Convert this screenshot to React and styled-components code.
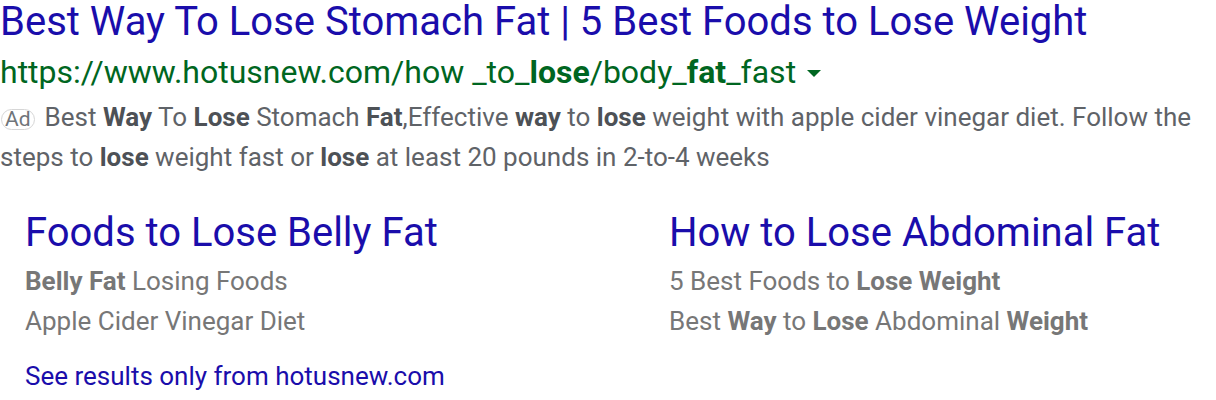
import React from "react";
import styled, { createGlobalStyle } from "styled-components";

const Global = createGlobalStyle`
  html, body { margin: 0; padding: 0; background: #fff; }
  body { font-family: Roboto, "Noto Sans", Arial, sans-serif; }
`;

const Result = styled.div`
  display: flex;
  flex-direction: column;
  width: 1216px;
`;

const Title = styled.a`
  font-size: 40px;
  line-height: 44px;
  color: #1a0dab;
  text-decoration: none;
  white-space: nowrap;
`;

const UrlLine = styled.div`
  display: flex;
  align-items: center;
  margin-top: 8px;
  font-size: 32px;
  line-height: 40px;
  color: #006621;
  white-space: nowrap;
  b { font-weight: 700; }
`;

const Caret = styled.span`
  display: inline-block;
  width: 0;
  height: 0;
  margin-left: 11px;
  margin-top: 3px;
  border-left: 7px solid transparent;
  border-right: 7px solid transparent;
  border-top: 7px solid #006621;
`;

const Desc = styled.div`
  margin-top: 5px;
  font-size: 26px;
  line-height: 40px;
  color: #5f6368;
  b { font-weight: 700; color: #4d5156; }
`;

const AdBadge = styled.span`
  display: inline-block;
  font-size: 21px;
  line-height: 19px;
  padding: 0 3px;
  border: 1px solid #d6d6d6;
  border-radius: 11px;
  color: #70757a;
  margin: 0 10px 0 1px;
  vertical-align: 0;
`;

const Sitelinks = styled.div`
  display: grid;
  grid-template-columns: 644px 1fr;
  padding-left: 25px;
  margin-top: 34px;
`;

const Sitelink = styled.div`
  display: flex;
  flex-direction: column;
`;

const SiteTitle = styled.a`
  font-size: 40px;
  line-height: 44px;
  color: #1a0dab;
  text-decoration: none;
  margin-bottom: 6px;
  white-space: nowrap;
`;

const SiteLine = styled.div`
  font-size: 26px;
  line-height: 40px;
  color: #777777;
  white-space: nowrap;
  b { font-weight: 700; }
`;

const SeeMore = styled.a`
  display: block;
  margin: 15px 0 0 25px;
  font-size: 26px;
  line-height: 40px;
  color: #1a0dab;
  text-decoration: none;
`;

export default function App() {
  return (
    <>
      <Global />
      <Result>
        <Title href="#">Best Way To Lose Stomach Fat | 5 Best Foods to Lose Weight</Title>
        <UrlLine>
          <span>
            https://www.hotusnew.com/how _to_<b>lose</b>/body_<b>fat</b>_fast
          </span>
          <Caret />
        </UrlLine>
        <Desc>
          <AdBadge>Ad</AdBadge>Best <b>Way</b> To <b>Lose</b> Stomach <b>Fat</b>,Effective <b>way</b> to{" "}
          <b>lose</b> weight with apple cider vinegar diet. Follow the steps to <b>lose</b> weight fast or{" "}
          <b>lose</b> at least 20 pounds in 2-to-4 weeks
        </Desc>
        <Sitelinks>
          <Sitelink>
            <SiteTitle href="#">Foods to Lose Belly Fat</SiteTitle>
            <SiteLine>
              <b>Belly Fat</b> Losing Foods
            </SiteLine>
            <SiteLine>Apple Cider Vinegar Diet</SiteLine>
          </Sitelink>
          <Sitelink>
            <SiteTitle href="#">How to Lose Abdominal Fat</SiteTitle>
            <SiteLine>
              5 Best Foods to <b>Lose Weight</b>
            </SiteLine>
            <SiteLine>
              Best <b>Way</b> to <b>Lose</b> Abdominal <b>Weight</b>
            </SiteLine>
          </Sitelink>
        </Sitelinks>
        <SeeMore href="#">See results only from hotusnew.com</SeeMore>
      </Result>
    </>
  );
}
